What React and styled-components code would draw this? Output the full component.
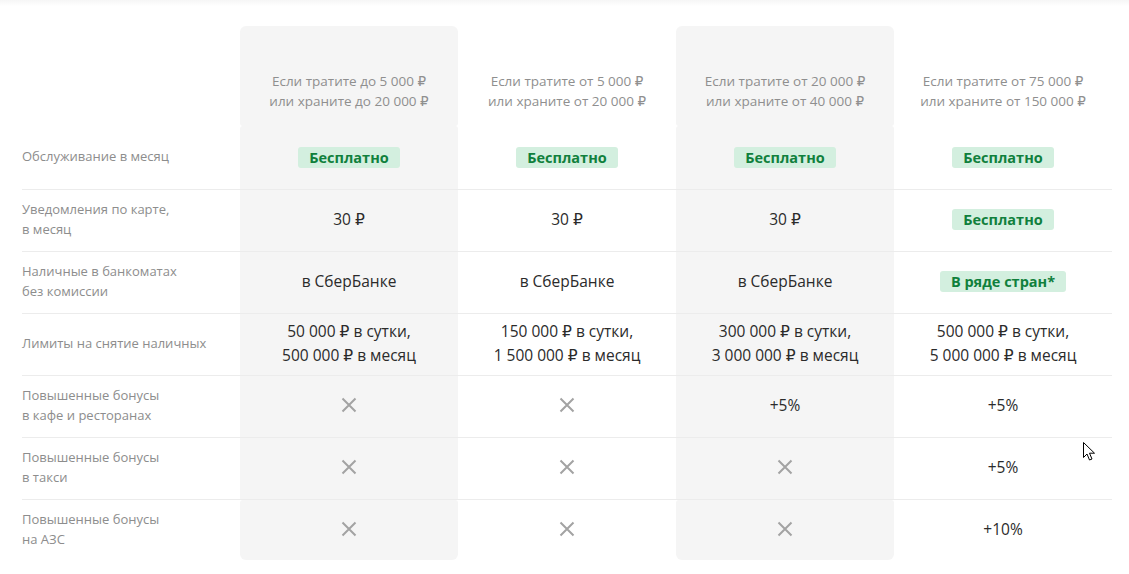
import styled, { createGlobalStyle } from 'styled-components';

const GlobalStyle = createGlobalStyle`
  body {
    margin: 0;
    background: #fff;
    font-family: "Open Sans", "DejaVu Sans", sans-serif;
  }
`;

const COLS = [
  ['Если тратите до 5 000 ₽', 'или храните до 20 000 ₽'],
  ['Если тратите от 5 000 ₽', 'или храните от 20 000 ₽'],
  ['Если тратите от 20 000 ₽', 'или храните от 40 000 ₽'],
  ['Если тратите от 75 000 ₽', 'или храните от 150 000 ₽'],
];

const free = { badge: 'Бесплатно' };
const no = { cross: true };

const ROWS = [
  { label: ['Обслуживание в месяц'], cells: [free, free, free, free] },
  {
    label: ['Уведомления по карте,', 'в месяц'],
    cells: [{ text: ['30 ₽'] }, { text: ['30 ₽'] }, { text: ['30 ₽'] }, free],
  },
  {
    label: ['Наличные в банкоматах', 'без комиссии'],
    cells: [
      { text: ['в СберБанке'] },
      { text: ['в СберБанке'] },
      { text: ['в СберБанке'] },
      { badge: 'В ряде стран*' },
    ],
  },
  {
    label: ['Лимиты на снятие наличных'],
    cells: [
      { text: ['50 000 ₽ в сутки,', '500 000 ₽ в месяц'] },
      { text: ['150 000 ₽ в сутки,', '1 500 000 ₽ в месяц'] },
      { text: ['300 000 ₽ в сутки,', '3 000 000 ₽ в месяц'] },
      { text: ['500 000 ₽ в сутки,', '5 000 000 ₽ в месяц'] },
    ],
  },
  {
    label: ['Повышенные бонусы', 'в кафе и ресторанах'],
    cells: [no, no, { text: ['+5%'] }, { text: ['+5%'] }],
  },
  {
    label: ['Повышенные бонусы', 'в такси'],
    cells: [no, no, no, { text: ['+5%'] }],
  },
  {
    label: ['Повышенные бонусы', 'на АЗС'],
    cells: [no, no, no, { text: ['+10%'] }],
  },
];

function Lines({ items }) {
  return items.map((line, i) => <div key={i}>{line}</div>);
}

function Cross() {
  return (
    <svg width="16" height="16" viewBox="0 0 16 16">
      <path d="M1.5 1.5 L14.5 14.5 M14.5 1.5 L1.5 14.5" stroke="#a3a3a3" strokeWidth="2" fill="none" />
    </svg>
  );
}

function Cursor() {
  return (
    <CursorWrap>
      <svg width="13" height="20" viewBox="0 0 13 20">
        <path
          d="M0.5 0.5 L0.5 15.5 L4 12 L6.5 18 L9 17 L6.5 11.2 L11.5 11.2 Z"
          fill="#fff"
          stroke="#000"
          strokeWidth="1"
          strokeLinejoin="round"
        />
      </svg>
    </CursorWrap>
  );
}

export default function App() {
  return (
    <>
      <GlobalStyle />
      <Page>
        <TopShade />
        <Table>
          <Row $height={100}>
            <LabelCell />
            {COLS.map((c, i) => (
              <HeadCell key={i} $shaded={i % 2 === 0}>
                <Lines items={c} />
              </HeadCell>
            ))}
          </Row>
          {ROWS.map((row, r) => (
            <Row key={r} $height={r === 0 ? 63 : 62} $border={r > 0}>
              <LabelCell>
                <Lines items={row.label} />
              </LabelCell>
              {row.cells.map((cell, i) => (
                <ValueCell
                  key={i}
                  $shaded={i % 2 === 0}
                  $first={r === 0}
                  $last={r === ROWS.length - 1}
                >
                  {cell.badge && <Badge>{cell.badge}</Badge>}
                  {cell.text && (
                    <ValueText>
                      <Lines items={cell.text} />
                    </ValueText>
                  )}
                  {cell.cross && <Cross />}
                </ValueCell>
              ))}
            </Row>
          ))}
        </Table>
        <Cursor />
      </Page>
    </>
  );
}

const Page = styled.div`
  position: relative;
  width: 1129px;
  height: 574px;
  overflow: hidden;
`;

const TopShade = styled.div`
  height: 6px;
  background: linear-gradient(#f6f6f6, #fff);
`;

const Table = styled.div`
  margin: 20px 0 0 22px;
  width: 1090px;
`;

const Row = styled.div`
  display: grid;
  grid-template-columns: repeat(5, 218px);
  height: ${({ $height }) => $height}px;
  box-sizing: border-box;
  ${({ $border }) => $border && 'border-top: 1px solid #ececec;'}
`;

const LabelCell = styled.div`
  display: flex;
  flex-direction: column;
  justify-content: center;
  padding-bottom: 3px;
  font-size: 13px;
  line-height: 20px;
  color: #8d8d8d;
`;

const HeadCell = styled.div`
  display: flex;
  flex-direction: column;
  justify-content: flex-end;
  align-items: center;
  padding-bottom: 15px;
  box-sizing: border-box;
  font-size: 13.5px;
  line-height: 20px;
  color: #8f8f8f;
  text-align: center;
  background: ${({ $shaded }) => ($shaded ? '#f5f5f5' : 'transparent')};
  border-radius: 6px 6px 3px 3px;
`;

const ValueCell = styled.div`
  display: flex;
  align-items: center;
  justify-content: center;
  text-align: center;
  padding-bottom: ${({ $first }) => ($first ? '1px' : '3px')};
  background: ${({ $shaded }) => ($shaded ? '#f5f5f5' : 'transparent')};
  border-radius: ${({ $first, $last }) =>
    $first ? '3px 3px 0 0' : $last ? '3px 3px 6px 6px' : '0'};
  margin-bottom: ${({ $last }) => ($last ? '1px' : '0')};
`;

const ValueText = styled.div`
  font-size: 15.5px;
  line-height: 24px;
  color: #2b2b2b;
`;

const Badge = styled.span`
  display: inline-block;
  padding: 0 11px;
  height: 21px;
  line-height: 21px;
  border-radius: 3px;
  background: #d3efdf;
  color: #10803c;
  font-size: 14.5px;
  font-weight: 700;
`;

const CursorWrap = styled.div`
  position: absolute;
  left: 1083px;
  top: 442px;
  line-height: 0;
`;
